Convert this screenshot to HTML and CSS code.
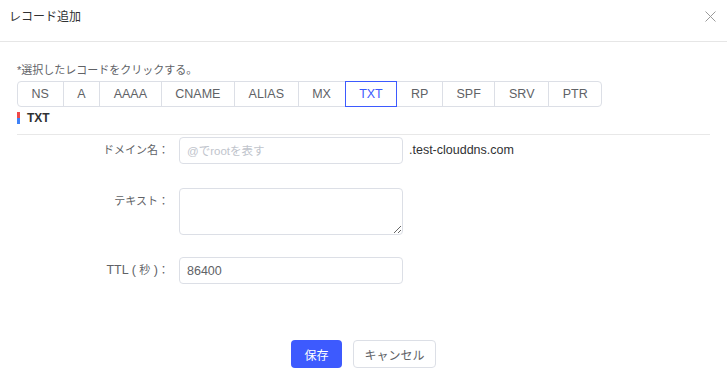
FILE: index.html
```html
<!DOCTYPE html>
<html lang="ja">
  <head>
    <meta charset="UTF-8" />
    <meta name="viewport" content="width=device-width, initial-scale=1.0" />
    <title>レコード追加</title>
    <link rel="stylesheet" href="styles.css">
  </head>

  <body>
    <div class="dialog">
      <div class="dialog-header">
        <span class="dialog-title">レコード追加</span>
        <button class="close-button" aria-label="close">
          <svg width="11" height="11" viewBox="0 0 11 11">
            <path d="M0.5 0.5 L10.5 10.5 M10.5 0.5 L0.5 10.5" stroke="#9a9a9a" stroke-width="1" fill="none" />
          </svg>
        </button>
      </div>

      <div class="dialog-body">
        <p class="hint">*選択したレコードをクリックする。</p>
        <div class="type-group">
          <button class="type-button">NS</button>
          <button class="type-button">A</button>
          <button class="type-button">AAAA</button>
          <button class="type-button">CNAME</button>
          <button class="type-button">ALIAS</button>
          <button class="type-button">MX</button>
          <button class="type-button active">TXT</button>
          <button class="type-button">RP</button>
          <button class="type-button">SPF</button>
          <button class="type-button">SRV</button>
          <button class="type-button">PTR</button>
        </div>
        <div class="type-title">TXT</div>
        <div class="divider"></div>

        <form class="record-form">
          <div class="form-row first">
            <label class="form-label" for="domain">ドメイン名：</label>
            <input class="form-input" id="domain" type="text" placeholder="@でrootを表す" />
            <span class="suffix">.test-clouddns.com</span>
          </div>
          <div class="form-row second">
            <label class="form-label" for="text">テキスト：</label>
            <textarea class="form-textarea" id="text"></textarea>
          </div>
          <div class="form-row third">
            <label class="form-label" for="ttl"><span class="latin">TTL ( </span>秒<span class="latin"> )</span>：</label>
            <input class="form-input" id="ttl" type="text" value="86400" />
          </div>
        </form>

        <div class="dialog-footer">
          <button class="save-button">保存</button>
          <button class="cancel-button">キャンセル</button>
        </div>
      </div>
    </div>
  </body>
</html>
```

FILE: styles.css
```css
body {
  margin: 0;
  background: #fff;
  font-family: "Liberation Sans", "Noto Sans CJK JP", sans-serif;
  color: #606266;
}

.dialog-header {
  display: flex;
  justify-content: space-between;
  align-items: flex-start;
  height: 42px;
  box-sizing: border-box;
  padding: 9px 11px 0 9px;
  border-bottom: 1px solid #e6e6e6;
}

.dialog-title {
  font-size: 12px;
  line-height: 16px;
  color: #303133;
}

.close-button {
  border: none;
  background: none;
  padding: 0;
  margin-top: 2px;
  width: 11px;
  height: 11px;
  display: flex;
  cursor: pointer;
}

.dialog-body {
  padding: 0 17px;
}

.hint {
  margin: 20px 0 0;
  font-size: 11px;
  line-height: 16px;
}

/* record type buttons */
.type-group {
  display: flex;
  margin-top: 3px;
}

.type-button {
  height: 26px;
  padding: 0 13.6px;
  margin-left: -1px;
  border: 1px solid #dcdfe6;
  background: #fff;
  color: #606266;
  font-family: inherit;
  font-size: 12.5px;
  cursor: pointer;
}

.type-button:first-child {
  margin-left: 0;
  border-radius: 4px 0 0 4px;
}

.type-button:last-child {
  border-radius: 0 4px 4px 0;
}

.type-button.active {
  position: relative;
  z-index: 1;
  border-color: #3d5afe;
  color: #3d5afe;
}

.type-title {
  margin-top: 5px;
  padding-left: 7px;
  border-left: 3px solid;
  border-image: linear-gradient(#f04848 50%, #3f82f7 50%) 1;
  font-size: 12px;
  line-height: 12px;
  font-weight: bold;
  color: #303133;
}

.divider {
  margin-top: 10px;
  height: 1px;
  background: #e8e8e8;
}

/* form */
.form-row {
  display: flex;
  align-items: flex-start;
}

.form-row.first {
  margin-top: 2px;
}

.form-row.second {
  margin-top: 24px;
}

.form-row.third {
  margin-top: 22px;
}

.form-label {
  width: 152px;
  margin-right: 10px;
  text-align: right;
  font-size: 11px;
  line-height: 27px;
  color: #606266;
}

.latin {
  font-size: 12.5px;
}

.form-input,
.form-textarea {
  width: 224px;
  box-sizing: border-box;
  border: 1px solid #dcdfe6;
  border-radius: 4px;
  padding: 0 7px;
  font-family: inherit;
  font-size: 12.5px;
  color: #606266;
}

.form-input {
  height: 27px;
}

.form-input::placeholder {
  color: #c0c4cc;
  font-size: 11.5px;
}

.form-textarea {
  height: 47px;
  padding: 5px 7px;
}

.suffix {
  margin-left: 6px;
  font-size: 12.5px;
  line-height: 27px;
  color: #303133;
}

.dialog-footer {
  display: flex;
  justify-content: center;
  gap: 11px;
  margin-top: 56px;
}

.save-button,
.cancel-button {
  height: 28px;
  border-radius: 4px;
  font-family: inherit;
  font-size: 12px;
  cursor: pointer;
}

.save-button {
  width: 51px;
  border: none;
  background: #3d5afe;
  color: #fff;
}

.cancel-button {
  width: 83px;
  border: 1px solid #dcdfe6;
  background: #fff;
  color: #606266;
}
```
